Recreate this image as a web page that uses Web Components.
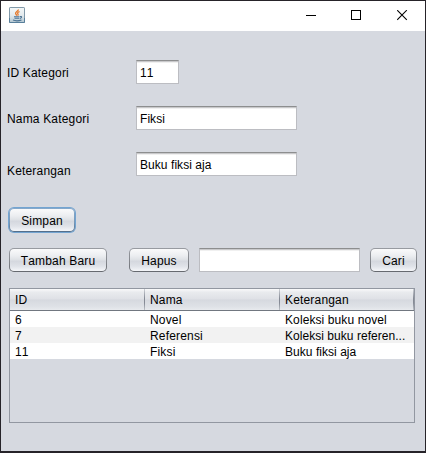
<!DOCTYPE html>
<html lang="id">
<head>
<meta charset="utf-8">
<title>Kategori</title>
<style>
html,body{margin:0;height:100%;overflow:hidden}
body{font:12px/16px "Liberation Sans",Arial,sans-serif;font-kerning:none;color:#000;background:#262329}
</style>
</head>
<body>
<category-window></category-window>
<script>
const define = (name, html, setup) => customElements.define(name, class extends HTMLElement {
  connectedCallback() {
    if (this.shadowRoot) return;
    this.attachShadow({mode: 'open'}).innerHTML = '<style>*,:host{box-sizing:border-box}:host{letter-spacing:.17px}</style>' + html;
    if (setup) setup(this);
  }
});

define('title-bar', `<style>
:host{display:flex;height:30px;background:#fff;align-items:flex-start}
.java{margin:6px auto 0 8px}
.ctl{display:block;margin-top:9px;width:11px;height:11px}
.max{margin:9px 35px 0 34px}
.close{margin-right:17px}
svg{display:block}
</style>
<svg class="java" width="16" height="16" viewBox="0 0 16 16">
<defs><linearGradient id="g" x2="0" y2="1"><stop offset="0" stop-color="#f4f7f8"/><stop offset=".5" stop-color="#e4ebee"/><stop offset="1" stop-color="#b3c6d0"/></linearGradient></defs>
<rect x=".5" y=".5" width="15" height="15" rx=".6" fill="url(#g)" stroke="#8199a9"/>
<path d="M.5 11v4.500h15V11" fill="none" stroke="#587f9b"/>
<path d="M9.500 2.500C9.500 4 6.200 4.700 6.600 6.500c.2.900 1 1.200 1 2.200M10.600 4.700c-1.800.5-2.500 1.300-1.700 2.200.4.600.3 1.100-.2 1.700" fill="none" stroke="#e5782a" stroke-width="1.300"/>
<path d="M5 9.700h5.500M5.500 11.300h4.800M4 13.100c2 .8 6 .8 8.500-.1M11 9.500c2.300-.4 1.900 1.500-.1 2" fill="none" stroke="#4c7394" stroke-width="1.100"/>
</svg>
<svg class="ctl" viewBox="0 0 11 11"><path d="M0 5.500h10" stroke="#000"/></svg>
<svg class="ctl max" viewBox="0 0 11 11"><rect x=".5" y=".5" width="9" height="9" fill="none" stroke="#000"/></svg>
<svg class="ctl close" viewBox="0 0 11 11"><path d="M.2.200l9.600 9.600M9.800.200L.2 9.800" stroke="#000" stroke-width="1.100"/></svg>`);

define('text-field', `<style>
:host{display:block;height:24px;padding:4px 3px 0 3px;background:linear-gradient(#c9c9cb 0 1px,#f0f0f0 1px 2px,#fff 2px);border:1px solid #bcbdc2;border-top-color:#8d8e8f;white-space:nowrap;letter-spacing:.06px}
</style><slot></slot>`);

define('push-button', `<style>
:host{display:flex;height:24px;justify-content:center;padding-top:5px;border-radius:5px;background:linear-gradient(#989ba1,#82858b 60%,#65686e);position:relative;white-space:nowrap}
:host::before{content:"";position:absolute;inset:1px;border-radius:4px;background:linear-gradient(#fafafb,#eceef1 30%,#dfe2e6 48%,#d5d8df 56%,#dfe2e8 78%,#f5f6f9)}
:host([focused]){box-shadow:0 0 0 1px #73a4d1;background:linear-gradient(#86a9cb,#7898b8 60%,#526d89)}
span{position:relative}
</style><span><slot></slot></span>`);

define('data-table', `<style>
:host{display:block;height:135px;border:1px solid #9297a1}
.r{display:grid;grid-template-columns:135px 135px 1fr;height:16px;background:#fff}
.r:nth-child(odd){background:#f2f2f2}
.r span{padding:1px 0 0 5px;height:16px;white-space:nowrap}
.h{display:grid;grid-template-columns:135px 135px 1fr;height:22px;background:linear-gradient(#fafafb,#e9ebee 15%,#dfe1e6 47%,#d6d9df 52%,#dfe2e7 85%,#e8eaee);border-bottom:1px solid #717780}
.h span{padding:3px 0 0 5px;border-right:1px solid;border-image:linear-gradient(#d5d8dd,#858a95 45%,#858a95 65%,#c5c9cf) 1;height:21px}
.r span:last-child{letter-spacing:.1px}
.r:nth-child(3) span:last-child,.r:nth-child(4) span:last-child{letter-spacing:.04px}
</style><div></div>`, host => {
  const rows = [['ID','Nama','Keterangan'],['6','Novel','Koleksi buku novel'],['7','Referensi','Koleksi buku referen...'],['11','Fiksi','Buku fiksi aja']];
  const box = host.shadowRoot.querySelector('div');
  rows.forEach((row, i) => {
    const line = document.createElement('div');
    line.className = i ? 'r' : 'h';
    row.forEach(t => { const c = document.createElement('span'); c.textContent = t; line.append(c); });
    box.append(line);
  });
});

define('category-window', `<style>
:host{display:flex;flex-direction:column;width:424px;height:450px;margin:1px;background:#d6d9e0}
.form{display:grid;grid-template-columns:129px 161px;row-gap:22px;padding:29px 0 0 6px}
.form label{padding-top:5px}
.save{display:flex;padding:32px 0 0 8px}
.bar{display:flex;padding:16px 0 0 8px}
data-table{margin:16px 10px 0 8px}
</style>
<title-bar></title-bar>
<div class="form">
<label>ID Kategori</label><text-field style="width:43px">11</text-field>
<label>Nama Kategori</label><text-field>Fiksi</text-field>
<label style="padding-top:11px;height:24px">Keterangan</label><text-field>Buku fiksi aja</text-field>
</div>
<div class="save"><push-button focused style="width:66px">Simpan</push-button></div>
<div class="bar"><push-button style="width:98px">Tambah Baru</push-button><push-button style="width:60px;margin-left:22px">Hapus</push-button><text-field style="width:161px;margin-left:10px"></text-field><push-button style="width:47px;margin-left:10px">Cari</push-button></div>
<data-table></data-table>`);
</script>
</body>
</html>
